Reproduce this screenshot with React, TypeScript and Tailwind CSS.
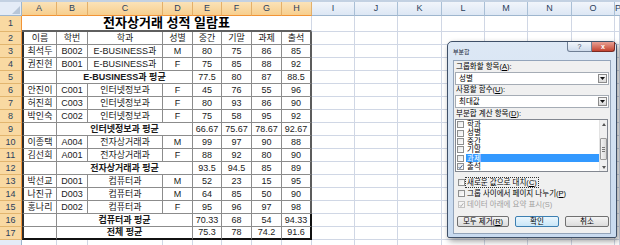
const font = "font-['Liberation_Sans','Noto_Sans_CJK_KR',sans-serif]"

const colW = ['w-[35px]', 'w-[31px]', 'w-[75px]', 'w-[30px]', 'w-[29px]', 'w-[30px]', 'w-[30px]', 'w-[30px]']
const colL = ['A', 'B', 'C', 'D', 'E', 'F', 'G', 'H']
const restW = ['w-[43px]', 'w-[43px]', 'w-[44px]', 'w-[43px]', 'w-[43px]', 'w-[44px]', 'w-[43px]', 'flex-1']
const restL = ['I', 'J', 'K', 'L', 'M', 'N', 'O', 'P']

type Row = { n: number; c?: string[]; s?: string; v?: string[] }

const rows: Row[] = [
  { n: 2, c: ['이름', '학번', '학과', '성별', '중간', '기말', '과제', '출석'] },
  { n: 3, c: ['최석두', 'B002', 'E-BUSINESS과', 'M', '80', '75', '86', '85'] },
  { n: 4, c: ['권진현', 'B001', 'E-BUSINESS과', 'F', '75', '85', '88', '92'] },
  { n: 5, s: 'E-BUSINESS과 평균', v: ['77.5', '80', '87', '88.5'] },
  { n: 6, c: ['안진이', 'C001', '인터넷정보과', 'F', '45', '76', '55', '96'] },
  { n: 7, c: ['허진희', 'C003', '인터넷정보과', 'F', '80', '93', '86', '90'] },
  { n: 8, c: ['박인숙', 'C002', '인터넷정보과', 'F', '75', '58', '95', '92'] },
  { n: 9, s: '인터넷정보과 평균', v: ['66.67', '75.67', '78.67', '92.67'] },
  { n: 10, c: ['이종택', 'A004', '전자상거래과', 'M', '99', '97', '90', '88'] },
  { n: 11, c: ['김선희', 'A001', '전자상거래과', 'F', '88', '92', '80', '90'] },
  { n: 12, s: '전자상거래과 평균', v: ['93.5', '94.5', '85', '89'] },
  { n: 13, c: ['박선교', 'D001', '컴퓨터과', 'M', '52', '23', '15', '95'] },
  { n: 14, c: ['나진규', 'D003', '컴퓨터과', 'M', '64', '85', '50', '90'] },
  { n: 15, c: ['홍나리', 'D002', '컴퓨터과', 'F', '95', '96', '97', '98'] },
  { n: 16, s: '컴퓨터과 평균', v: ['70.33', '68', '54', '94.33'] },
  { n: 17, s: '전체 평균', v: ['75.3', '78', '74.2', '91.6'] },
]

const listItems = ['학과', '성별', '중간', '기말', '과제', '출석']

function cellCls(i: number, n: number) {
  const last = i === 7
  return [
    colW[i],
    'shrink-0 flex items-center justify-center overflow-visible whitespace-nowrap',
    i === 0 ? 'border-l-2 border-l-[#2e2e2e]' : '',
    last ? (n >= 16 ? 'border-r-2 border-r-[#111]' : 'border-r-2 border-r-[#5c5c5c]') : 'border-r border-r-[#8c8c8c]',
    n === 17 ? 'border-b-2 border-b-[#111]' : 'border-b border-b-[#8c8c8c]',
  ].join(' ')
}

function RowHead({ n, sel = true }: { n?: number; sel?: boolean }) {
  return (
    <div
      className={
        'w-[22px] shrink-0 flex items-center justify-center text-[9px] text-[#2b3f5c] border-r border-b ' +
        (sel
          ? 'bg-[#f9d9a2] border-r-[#f29436] border-b-[#e2b56e]'
          : 'bg-[#e4ecf7] border-r-[#9eb6ce] border-b-[#9eb6ce]')
      }
    >
      {n}
    </div>
  )
}

function Blanks() {
  return (
    <>
      {restW.map((w, i) => (
        <div key={i} className={w + ' shrink-0 border-r border-b border-r-[#d0d7e5] border-b-[#d0d7e5]'} />
      ))}
    </>
  )
}

function Check({ on, disabled }: { on?: boolean; disabled?: boolean }) {
  return (
    <div
      className={
        'w-[7px] h-[7px] shrink-0 border flex items-center justify-center ' +
        (disabled ? 'border-[#c2c2c2] bg-[#f4f4f4]' : 'border-[#8e8f8f] bg-linear-to-br from-[#e6e6e6] to-white')
      }
    >
      {on && (
        <svg width="6" height="6" viewBox="0 0 6 6">
          <path d="M0.8 3.2 L2.3 4.8 L5.2 1" fill="none" stroke={disabled ? '#a5a5a5' : '#2b4f86'} strokeWidth="1.1" />
        </svg>
      )}
    </div>
  )
}

function Combo({ value }: { value: string }) {
  return (
    <div className="h-[13px] border border-[#a5acb5] bg-white flex items-center justify-between pl-[3px] pr-[1px]">
      <span>{value}</span>
      <div className="w-[9px] h-[9px] border border-[#8b8b8b] bg-linear-to-b from-[#f7f7f7] to-[#d9d9d9] flex items-center justify-center">
        <svg width="5" height="3" viewBox="0 0 5 3">
          <path d="M0 0 H5 L2.5 3 Z" fill="#111" />
        </svg>
      </div>
    </div>
  )
}

function Dialog() {
  return (
    <div className="absolute left-[447px] top-[41px] w-[170px] h-[197px] flex flex-col rounded-t-[5px] rounded-b-[2px] border border-[#3f5068] bg-linear-to-b from-[#dde8f5] to-[#c8daef] shadow-[2px_3px_6px_rgba(0,0,0,0.4)] text-[7.5px] leading-none text-black">
      <div className="h-[18px] shrink-0 flex items-start justify-between">
        <span className="pl-[5px] pt-[7px] text-[6px] text-[#1d2b3d]">부분합</span>
        <div className="flex mr-[1px]">
          <div className="w-[25px] h-[10px] rounded-bl-[3px] border border-t-0 border-[#6f7f95] bg-linear-to-b from-[#f2f6fb] to-[#cfdbeb] flex items-center justify-center text-[7px] text-[#3d4b5e]">?</div>
          <div className="w-[23px] h-[10px] rounded-br-[3px] border border-t-0 border-l-0 border-[#7a2a22] bg-linear-to-b from-[#e8a094] to-[#c3412e] flex items-center justify-center text-[7px] font-bold text-white">x</div>
        </div>
      </div>
      <div className="flex-1 mx-[5px] mb-[3px] border border-[#93a4ba] bg-[#f0f0f0] px-[1px] flex flex-col">
        <div className="mt-[1px] h-[10px] flex items-center pl-[1px]">그룹화할 항목(<u>A</u>):</div>
        <Combo value="성별" />
        <div className="h-[10px] flex items-center pl-[1px]">사용할 함수(<u>U</u>):</div>
        <Combo value="최대값" />
        <div className="h-[11px] flex items-center pl-[1px]">부분합 계산 항목(<u>D</u>):</div>
        <div className="h-[53px] mr-[1px] border border-[#828790] bg-white flex">
          <div className="flex-1 flex flex-col pt-[0.5px]">
            {listItems.map((t, i) => (
              <div key={t} className="h-[8.4px] flex items-center pl-[1px]">
                <Check on={t === '출석'} />
                <div className={'flex-1 h-full flex items-center ml-[2px] pl-[1px] ' + (i === 4 ? 'bg-[#3399ff] text-white' : '')}>{t}</div>
              </div>
            ))}
          </div>
          <div className="w-[8px] shrink-0 bg-[#f0f0f0] border-l border-[#e3e3e3] flex flex-col items-center">
            <div className="h-[8px] flex items-center">
              <svg width="4" height="3" viewBox="0 0 4 3"><path d="M0 3 H4 L2 0 Z" fill="#555" /></svg>
            </div>
            <div className="mt-[10px] w-[7px] h-[22px] rounded-[1px] border border-[#9a9a9a] bg-linear-to-r from-[#f3f3f3] to-[#dadada] flex flex-col items-center justify-center gap-[1px]">
              <div className="w-[3px] h-px bg-[#777]" />
              <div className="w-[3px] h-px bg-[#777]" />
              <div className="w-[3px] h-px bg-[#777]" />
            </div>
            <div className="mt-auto h-[8px] flex items-center">
              <svg width="4" height="3" viewBox="0 0 4 3"><path d="M0 0 H4 L2 3 Z" fill="#555" /></svg>
            </div>
          </div>
        </div>
        <div className="mt-[5px] h-[11px] flex items-center pl-[3px]">
          <Check />
          <span className="ml-[1px] px-[1px] py-[1px] outline outline-1 outline-dotted outline-[#333]">새로운 값으로 대치(<u>C</u>)</span>
        </div>
        <div className="h-[11px] flex items-center pl-[3px]">
          <Check />
          <span className="ml-[2px]">그룹 사이에서 페이지 나누기(<u>P</u>)</span>
        </div>
        <div className="h-[11px] flex items-center pl-[3px] text-[#a0a0a0]">
          <Check on disabled />
          <span className="ml-[2px]">데이터 아래에 요약 표시(S)</span>
        </div>
        <div className="mt-[6px] flex gap-[6px] pl-[2px]">
          <div className="w-[52px] h-[11px] rounded-[2px] border border-[#707070] bg-linear-to-b from-[#f4f4f4] to-[#dcdcdc] flex items-center justify-center">모두 제거(<u>R</u>)</div>
          <div className="w-[44px] h-[11px] rounded-[2px] border border-[#3c7fb1] bg-linear-to-b from-[#eaf6fd] to-[#c9e6f8] flex items-center justify-center">확인</div>
          <div className="w-[44px] h-[11px] rounded-[2px] border border-[#707070] bg-linear-to-b from-[#f4f4f4] to-[#dcdcdc] flex items-center justify-center">취소</div>
        </div>
      </div>
    </div>
  )
}

export default function App() {
  return (
    <div className={'relative w-[620px] h-[245px] overflow-hidden bg-white ' + font}>
      {/* column headers */}
      <div className="flex h-[16px] border-t-2 border-t-[#c3d1e2]">
        <div className="w-[22px] shrink-0 relative bg-[#e4ecf7] border-r border-b border-[#9eb6ce]">
          <svg className="absolute right-[1px] bottom-[1px]" width="8" height="8" viewBox="0 0 8 8">
            <path d="M8 0 V8 H0 Z" fill="#b7c6d8" />
          </svg>
        </div>
        {colL.map((l, i) => (
          <div key={l} className={colW[i] + ' shrink-0 flex items-center justify-center text-[9px] text-[#2b3f5c] bg-linear-to-b from-[#fae2b8] to-[#f7cf8e] border-r border-r-[#e3b06a] border-b border-b-[#f29436]'}>
            {l}
          </div>
        ))}
        {restL.map((l, i) => (
          <div key={l} className={restW[i] + ' shrink-0 flex items-center justify-center text-[9px] text-[#2b3f5c] bg-linear-to-b from-[#f1f5fb] to-[#dde7f4] border-r border-r-[#a9bfd6] border-b border-b-[#9eb6ce]'}>
            {l}
          </div>
        ))}
      </div>

      {/* title row */}
      <div className="flex h-[16px]">
        <RowHead n={1} />
        <div className="w-[290px] shrink-0 flex items-center justify-center text-[13px] font-bold text-black border-r border-r-[#d0d7e5] border-b-2 border-b-[#5f5f5f]">
          전자상거래 성적 일람표
        </div>
        <Blanks />
      </div>

      {rows.map(r => (
        <div key={r.n} className="flex h-[13px] text-[9px] leading-none text-[#1a1a1a]">
          <RowHead n={r.n} />
          {r.c ? (
            r.c.map((t, i) => (
              <div key={i} className={cellCls(i, r.n)}>{t}</div>
            ))
          ) : (
            <>
              <div className={cellCls(0, r.n)} />
              <div className={'w-[136px] shrink-0 flex items-center justify-center font-bold whitespace-nowrap border-r border-r-[#8c8c8c] ' + (r.n === 17 ? 'border-b-2 border-b-[#111]' : 'border-b border-b-[#8c8c8c]')}>
                {r.s}
              </div>
              {r.v!.map((t, j) => (
                <div key={j} className={cellCls(j + 4, r.n)}>{t}</div>
              ))}
            </>
          )}
          <Blanks />
        </div>
      ))}

      {/* row 18, only a sliver shows */}
      <div className="flex h-[13px]">
        <RowHead sel={false} />
        {colW.map((w, i) => (
          <div key={i} className={w + ' shrink-0 border-r border-r-[#d0d7e5]'} />
        ))}
        <Blanks />
      </div>

      <Dialog />
    </div>
  )
}
